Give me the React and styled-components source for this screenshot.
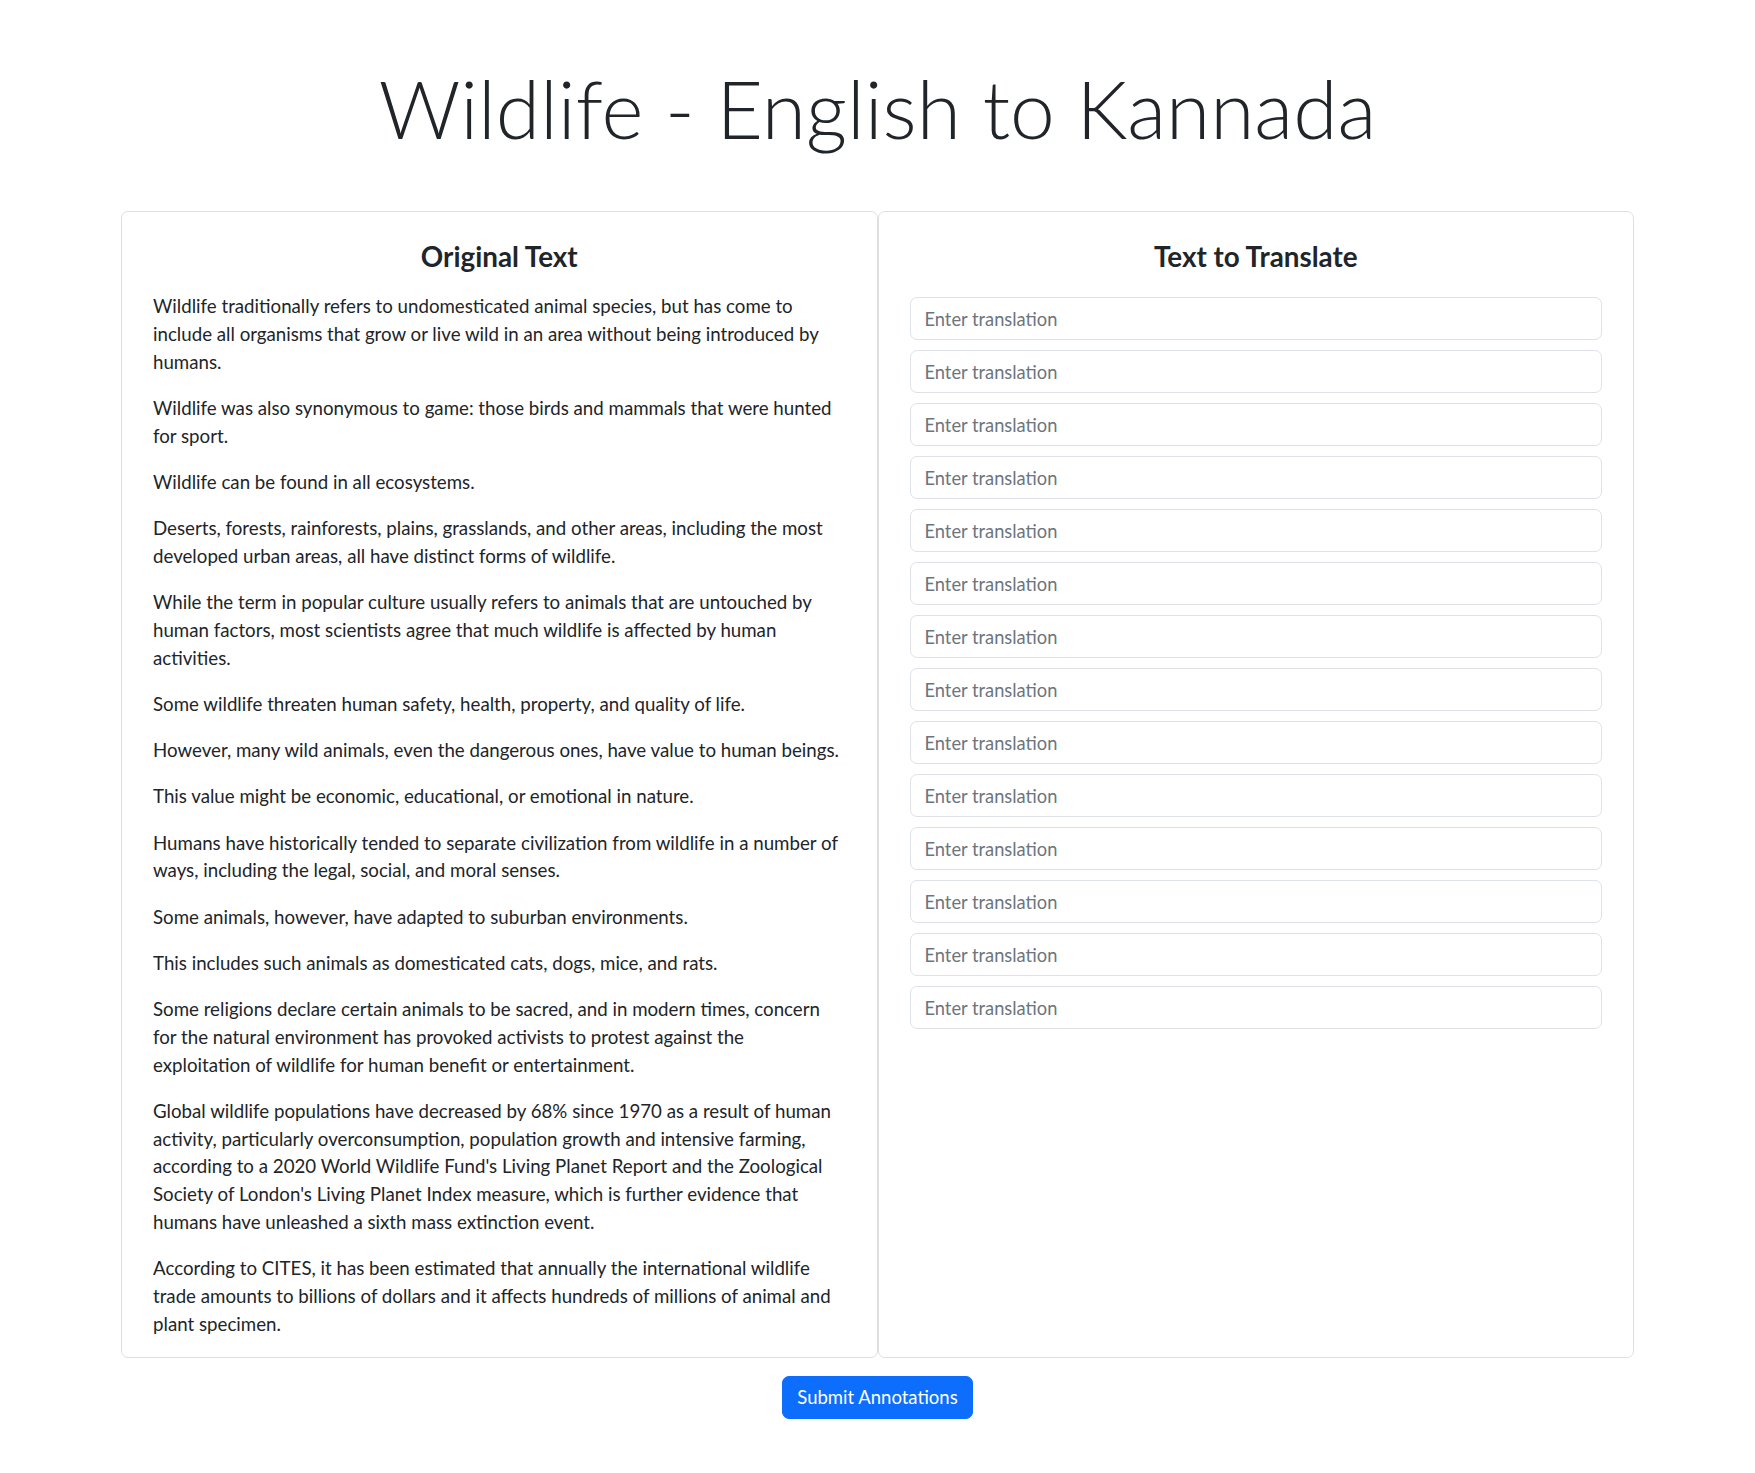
import React from "react";
import styled, { createGlobalStyle } from "styled-components";

const GlobalStyle = createGlobalStyle`
  * {
    box-sizing: border-box;
  }

  body {
    margin: 0;
    background-color: #ffffff;
    color: #212529;
    font-family: "Lato", "Noto Sans", sans-serif;
    font-size: 18.7px;
    line-height: 27.75px;
  }
`;

const Page = styled.div`
  display: flex;
  flex-direction: column;
  align-items: center;
  padding: 60px 0 56px;
`;

const PageTitle = styled.h1`
  margin: 0 0 55px;
  font-size: 80.3px;
  font-weight: 300;
  line-height: 1.2;
  color: #212529;
  text-align: center;
`;

const Columns = styled.div`
  display: grid;
  grid-template-columns: 1fr 1fr;
  width: 1513px;
`;

const Card = styled.section`
  display: flex;
  flex-direction: column;
  padding: 28px 31px 0;
  border: 1px solid #dfdfdf;
  border-radius: 7px;
  background-color: #ffffff;
`;

const CardTitle = styled.h4`
  margin: 0 0 19.5px;
  font-size: 27.8px;
  font-weight: 700;
  line-height: 1.2;
  text-align: center;
  color: #212529;
`;

const Paragraph = styled.p`
  margin: 0 0 18.5px;
`;

const InputList = styled.div`
  display: flex;
  flex-direction: column;
  gap: 10px;
  padding-top: 4px;
`;

const TranslationInput = styled.input`
  display: block;
  width: 100%;
  height: 43px;
  padding: 0 14px;
  border: 1px solid #dee2e6;
  border-radius: 7px;
  font-family: "Lato", "Noto Sans", sans-serif;
  font-size: 18.3px;
  color: #212529;
  background-color: #ffffff;
  outline: none;

  &::placeholder {
    color: #6c757d;
  }
`;

const SubmitButton = styled.button`
  margin-top: 18px;
  height: 43px;
  padding: 0 14px;
  border: 1px solid #0d6efd;
  border-radius: 7px;
  background-color: #0d6efd;
  color: #ffffff;
  font-family: "Lato", "Noto Sans", sans-serif;
  font-size: 18.5px;
  cursor: pointer;
`;

const sentences = [
  "Wildlife traditionally refers to undomesticated animal species, but has come to include all organisms that grow or live wild in an area without being introduced by humans.",
  "Wildlife was also synonymous to game: those birds and mammals that were hunted for sport.",
  "Wildlife can be found in all ecosystems.",
  "Deserts, forests, rainforests, plains, grasslands, and other areas, including the most developed urban areas, all have distinct forms of wildlife.",
  "While the term in popular culture usually refers to animals that are untouched by human factors, most scientists agree that much wildlife is affected by human activities.",
  "Some wildlife threaten human safety, health, property, and quality of life.",
  "However, many wild animals, even the dangerous ones, have value to human beings.",
  "This value might be economic, educational, or emotional in nature.",
  "Humans have historically tended to separate civilization from wildlife in a number of ways, including the legal, social, and moral senses.",
  "Some animals, however, have adapted to suburban environments.",
  "This includes such animals as domesticated cats, dogs, mice, and rats.",
  "Some religions declare certain animals to be sacred, and in modern times, concern for the natural environment has provoked activists to protest against the exploitation of wildlife for human benefit or entertainment.",
  "Global wildlife populations have decreased by 68% since 1970 as a result of human activity, particularly overconsumption, population growth and intensive farming, according to a 2020 World Wildlife Fund's Living Planet Report and the Zoological Society of London's Living Planet Index measure, which is further evidence that humans have unleashed a sixth mass extinction event.",
  "According to CITES, it has been estimated that annually the international wildlife trade amounts to billions of dollars and it affects hundreds of millions of animal and plant specimen.",
];

function App() {
  return (
    <>
      <GlobalStyle />
      <Page>
        <PageTitle>Wildlife - English to Kannada</PageTitle>
        <Columns>
          <Card>
            <CardTitle>Original Text</CardTitle>
            {sentences.map((s, i) => (
              <Paragraph key={i}>{s}</Paragraph>
            ))}
          </Card>
          <Card>
            <CardTitle>Text to Translate</CardTitle>
            <InputList>
              {sentences.map((_, i) => (
                <TranslationInput key={i} type="text" placeholder="Enter translation" />
              ))}
            </InputList>
          </Card>
        </Columns>
        <SubmitButton type="button">Submit Annotations</SubmitButton>
      </Page>
    </>
  );
}

export default App;
